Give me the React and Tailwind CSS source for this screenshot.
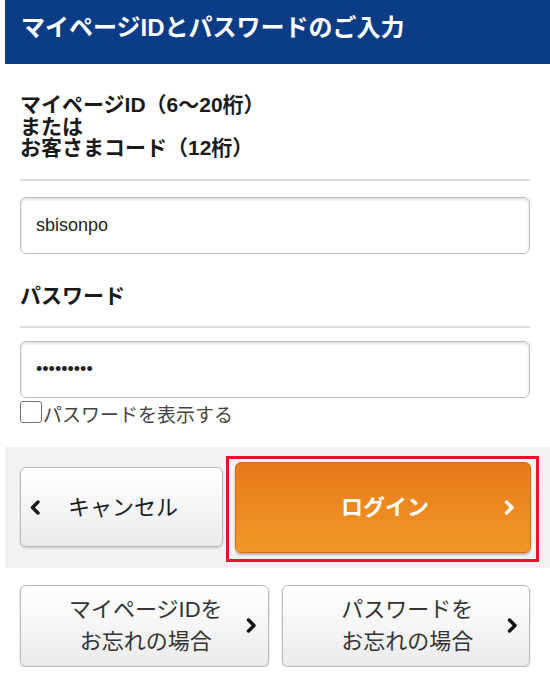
import React from 'react';

function Chevron({ dir = 'right', className = '' }) {
  const pts = dir === 'right' ? '2.5,2 8,7.5 2.5,13' : '8,2 2.5,7.5 8,13';
  return (
    <svg width="11" height="15" viewBox="0 0 11 15" className={className}>
      <polyline points={pts} fill="none" stroke="currentColor" strokeWidth="3.4" strokeLinecap="round" strokeLinejoin="round" />
    </svg>
  );
}

export default function App() {
  return (
    <div className="pl-[5px] w-[550px] bg-white font-['Liberation_Sans','Noto_Sans_CJK_JP',sans-serif]">
      {/* header */}
      <div className="h-[64px] bg-[#0b3c86] flex items-center pl-[16px] pb-[8px]">
        <h1 className="text-white text-[24px] font-bold leading-none">マイページIDとパスワードのご入力</h1>
      </div>

      <div className="pl-[15px] pr-[20px]">
        <div className="pt-[30px] text-[21px] font-bold leading-[21.5px] text-[#1a1a1a]">
          <p>マイページID（6～20桁）</p>
          <p>または</p>
          <p>お客さまコード（12桁）</p>
        </div>
        <div className="mt-[20px] h-[2px] bg-[#dcdcdc]" />
        <input
          type="text"
          readOnly
          value="sbisonpo"
          className="mt-[16px] block w-full h-[57px] rounded-[6px] border border-[#bdbdbd] bg-white pl-[15px] text-[18px] text-[#222] shadow-[inset_0_2px_3px_rgba(0,0,0,0.12)] outline-none"
        />

        <p className="mt-[30px] text-[21px] font-bold leading-[24px] text-[#1a1a1a]">パスワード</p>
        <div className="mt-[18px] h-[2px] bg-[#dcdcdc]" />
        <input
          type="password"
          readOnly
          value="password1"
          className="mt-[13px] block w-full h-[57px] rounded-[6px] border border-[#bdbdbd] bg-white pl-[15px] text-[18px] text-[#222] shadow-[inset_0_2px_3px_rgba(0,0,0,0.12)] outline-none"
        />
        <label className="mt-[3px] flex items-start">
          <input type="checkbox" className="appearance-none w-[22px] h-[22px] rounded-[3px] border border-[#6f6f6f] bg-white" />
          <span className="pt-[4px] pl-[1px] text-[19px] leading-[22px] text-[#444]">パスワードを表示する</span>
        </label>
      </div>

      {/* action area */}
      <div className="mt-[20px] h-[121px] bg-[#f2f2f2] flex items-center pl-[15px]">
        <button className="w-[203px] h-[80px] rounded-[6px] border border-[#b9b9b9] bg-gradient-to-b from-white to-[#ebebeb] shadow-[0_1px_2px_rgba(0,0,0,0.2)] flex items-center pl-[9px] text-[#1a1a1a]">
          <Chevron dir="left" />
          <span className="ml-[27px] text-[22px]">キャンセル</span>
        </button>
        <div className="ml-[3px] mt-[3px] border-[3px] border-[#e5142d] pt-[3px] pb-[6px] pl-[6px] pr-[5px]">
          <button className="w-[296px] h-[91px] rounded-[6px] border border-[#d06d12] bg-gradient-to-b from-[#e77a1a] to-[#f29727] shadow-[0_2px_2px_rgba(0,0,0,0.25)] flex items-center pl-[40px] pr-[15px] text-white">
            <span className="flex-1 text-center text-[22px] font-bold">ログイン</span>
            <Chevron className="ml-[10px]" />
          </button>
        </div>
      </div>

      {/* forgot links */}
      <div className="mt-[17px] pl-[15px] pr-[20px] grid grid-cols-2 gap-[13px]">
        <button className="h-[82px] rounded-[6px] border border-[#b9b9b9] bg-gradient-to-b from-white to-[#ebebeb] shadow-[0_1px_2px_rgba(0,0,0,0.2)] flex items-center pl-[35px] pr-[11px] text-[#111]">
          <span className="flex-1 text-center text-[22px] leading-[32px] text-[#333]">マイページIDを<br />お忘れの場合</span>
          <Chevron className="ml-[10px]" />
        </button>
        <button className="h-[82px] rounded-[6px] border border-[#b9b9b9] bg-gradient-to-b from-white to-[#ebebeb] shadow-[0_1px_2px_rgba(0,0,0,0.2)] flex items-center pl-[35px] pr-[11px] text-[#111]">
          <span className="flex-1 text-center text-[22px] leading-[32px] text-[#333]">パスワードを<br />お忘れの場合</span>
          <Chevron className="ml-[10px]" />
        </button>
      </div>
    </div>
  );
}
